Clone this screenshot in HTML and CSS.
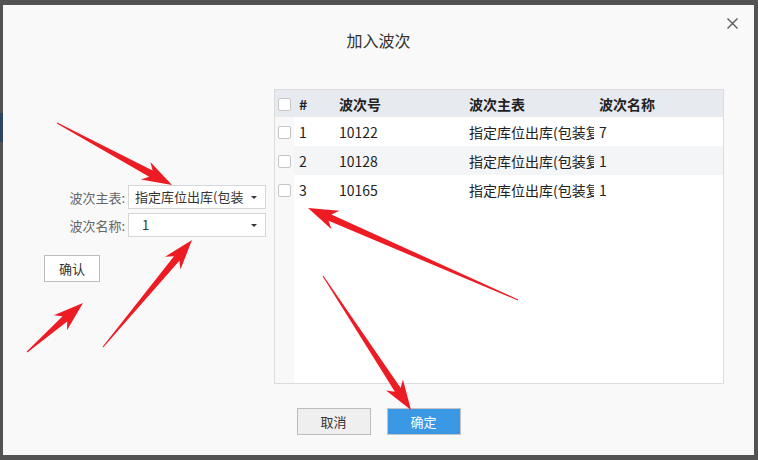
FILE: index.html
```html
<!DOCTYPE html>
<html lang="zh-CN">
<head>
  <meta charset="UTF-8" />
  <title>加入波次</title>
  <link rel="stylesheet" href="styles.css">
</head>
<body>
  <div class="dialog">
    <div class="dlg-head">
      <h3 class="dlg-title">加入波次</h3>
      <span class="dlg-close">
        <svg width="11" height="11" viewBox="0 0 11 11"><path d="M0.5 0.5L10.5 10.5M10.5 0.5L0.5 10.5" stroke="#5a5a5a" stroke-width="1.4" fill="none"/></svg>
      </span>
    </div>

    <div class="dlg-body">
      <div class="side">
        <div class="field">
          <label>波次主表:</label>
          <div class="combo"><span class="combo-text">指定库位出库(包装复核)</span><i class="caret"></i></div>
        </div>
        <div class="field">
          <label>波次名称:</label>
          <div class="combo combo-input"><span class="combo-text">1</span><i class="caret"></i></div>
        </div>
        <button class="btn btn-confirm">确认</button>
      </div>

      <div class="grid">
        <table class="grid-table">
          <thead>
            <tr>
              <th class="col-ck"><span class="ck"></span></th>
              <th class="col-no">#</th>
              <th class="col-id">波次号</th>
              <th class="col-main">波次主表</th>
              <th>波次名称</th>
            </tr>
          </thead>
          <tbody>
            <tr>
              <td class="col-ck"><span class="ck"></span></td>
              <td>1</td>
              <td>10122</td>
              <td>指定库位出库(包装复核)</td>
              <td>7</td>
            </tr>
            <tr class="alt">
              <td class="col-ck"><span class="ck"></span></td>
              <td>2</td>
              <td>10128</td>
              <td>指定库位出库(包装复核)</td>
              <td>1</td>
            </tr>
            <tr>
              <td class="col-ck"><span class="ck"></span></td>
              <td>3</td>
              <td>10165</td>
              <td>指定库位出库(包装复核)</td>
              <td>1</td>
            </tr>
          </tbody>
        </table>
        <div class="grid-fill"></div>
      </div>
    </div>

    <div class="dlg-foot">
      <button class="btn">取消</button>
      <button class="btn btn-primary">确定</button>
    </div>
  </div>

  <!-- red annotation arrows drawn over the screenshot -->
  <svg class="marks" width="758" height="460" viewBox="0 0 758 460">
    <g fill="#ed1c24">
      <polygon points="56.8,123.4 149.2,176.7 140.9,179.5 172,185 150.4,161.9 152.6,170.5 57.2,122.6"/>
      <polygon points="103.4,347.3 179.4,260.7 180.5,269.5 192,240 165.1,256.7 174.0,256.3 102.6,346.7"/>
      <polygon points="27.3,352.4 67.2,321.4 67.0,330.3 83,303 53.8,315.3 62.6,316.2 26.7,351.6"/>
      <polygon points="518.2,299.5 331.4,214.4 339.5,210.8 308,208 331.5,229.2 328.6,220.8 517.8,300.5"/>
      <polygon points="322.6,276.3 394.9,391.8 386.1,390.4 411,410 402.9,379.4 400.7,388.0 323.4,275.7"/>
    </g>
  </svg>
</body>
</html>
```

FILE: styles.css
```css
body {
  margin: 0;
  position: relative;
  width: 758px;
  height: 460px;
  overflow: hidden;
  font-family: "Noto Sans CJK SC", "Noto Sans", sans-serif;
  color: #333;
  background: linear-gradient(#2e4560, #2e4560) 0 113px / 3px 29px no-repeat, #535353;
}

.dialog {
  position: relative;
  margin: 5px 4px 0 3px;
  height: 450px;
  background: #f9f9f9;
}

/* header */
.dlg-head {
  height: 84px;
  box-sizing: border-box;
  padding-top: 23px;
}
.dlg-title {
  margin: 0;
  font-size: 16px;
  line-height: 24px;
  font-weight: normal;
  color: #333;
  text-align: center;
}
.dlg-close {
  position: absolute;
  top: 13px;
  right: 16px;
  width: 11px;
  height: 11px;
  cursor: pointer;
}
.dlg-close svg {
  display: block;
}

/* body */
.dlg-body {
  display: flex;
  height: 295px;
}
.side {
  width: 271px;
  padding-top: 96px;
  box-sizing: border-box;
}
.field {
  display: flex;
  align-items: center;
  height: 24px;
  margin-bottom: 4px;
}
.field label {
  width: 122px;
  text-align: right;
  font-size: 13px;
  color: #666;
}
.combo {
  position: relative;
  margin-left: 3px;
  width: 138px;
  height: 24px;
  box-sizing: border-box;
  border: 1px solid #d6d6d6;
  background: #fff;
  padding: 0 22px 0 6px;
  overflow: hidden;
}
.combo-input {
  padding-left: 13px;
}
.combo-text {
  display: block;
  font-size: 13px;
  line-height: 22px;
  white-space: nowrap;
  overflow: hidden;
  color: #333;
}
.caret {
  position: absolute;
  right: 8px;
  top: 10px;
  width: 0;
  height: 0;
  border-left: 3px solid transparent;
  border-right: 3px solid transparent;
  border-top: 3px solid #333;
}

.btn {
  width: 74px;
  height: 27px;
  box-sizing: border-box;
  border: 1px solid #bdbdbd;
  background: #efefef;
  color: #333;
  font-family: inherit;
  font-size: 13px;
  line-height: 25px;
  padding: 0;
  cursor: pointer;
}
.btn-confirm {
  display: block;
  width: 56px;
  margin: 18px 0 0 41px;
  background: #fff;
}
.btn-primary {
  background: #3a98e4;
  border-color: #c4c4c4;
  color: #fff;
}

/* grid */
.grid {
  width: 450px;
  box-sizing: border-box;
  border: 1px solid #dcdcdc;
  display: flex;
  flex-direction: column;
  background: #fff;
}
.grid-table {
  width: 100%;
  border-collapse: collapse;
  table-layout: fixed;
  font-size: 14px;
  color: #222;
}
.grid-table th,
.grid-table td {
  box-sizing: border-box;
  padding: 0 0 0 5px;
  text-align: left;
  white-space: nowrap;
  overflow: hidden;
}
.grid-table th {
  height: 27px;
  background: #e7eaee;
  font-weight: bold;
}
.grid-table td {
  height: 29px;
}
.grid-table tr.alt td {
  background: #f4f5f7;
}
.grid-table .col-ck {
  width: 19px;
  padding-left: 3px;
}
.grid-table td.col-ck,
.grid-table tr.alt td.col-ck {
  background: #f8f8f8;
}
.grid-table .col-no {
  width: 40px;
}
.grid-table .col-id,
.grid-table .col-main {
  width: 130px;
}
.ck {
  display: block;
  width: 13px;
  height: 13px;
  box-sizing: border-box;
  border: 1px solid #c6c6c6;
  border-radius: 2px;
  background: #fff;
  margin-top: 2px;
}
.grid-fill {
  flex: 1;
  background: linear-gradient(to right, #f8f8f8 19px, #fff 19px);
}

/* footer */
.dlg-foot {
  display: flex;
  justify-content: center;
  gap: 16px;
  padding-top: 24px;
}

.marks {
  position: absolute;
  left: 0;
  top: 0;
  pointer-events: none;
}
```
